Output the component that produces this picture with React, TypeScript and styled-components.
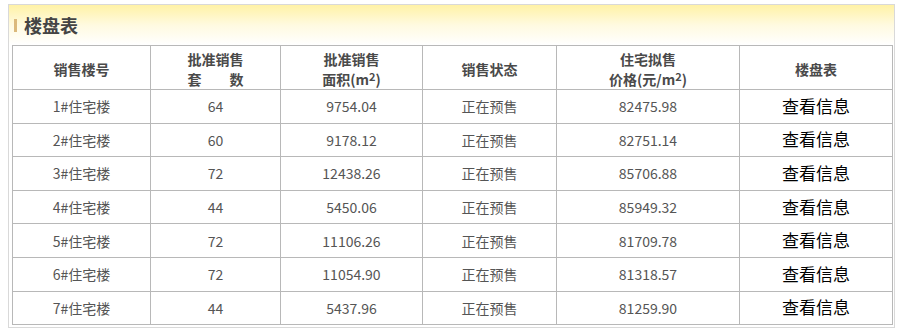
import styled, { createGlobalStyle } from 'styled-components';

const rows = [
    { name: '1#住宅楼', count: 64, area: '9754.04', price: '82475.98' },
    { name: '2#住宅楼', count: 60, area: '9178.12', price: '82751.14' },
    { name: '3#住宅楼', count: 72, area: '12438.26', price: '85706.88' },
    { name: '4#住宅楼', count: 44, area: '5450.06', price: '85949.32' },
    { name: '5#住宅楼', count: 72, area: '11106.26', price: '81709.78' },
    { name: '6#住宅楼', count: 72, area: '11054.90', price: '81318.57' },
    { name: '7#住宅楼', count: 44, area: '5437.96', price: '81259.90' },
]

const colWidths = [138, 130, 142, 134, 183, 153]

const GlobalStyle = createGlobalStyle`
    body {
        margin: 0;
        background: #fff;
        font-family: "Noto Sans CJK SC", "Noto Sans", sans-serif;
    }
`

export default function App() {
    return (
        <>
            <GlobalStyle/>
            <Panel>
                <Title>
                    <TitleBar/>
                    楼盘表
                </Title>
                <Table>
                    <colgroup>
                        {colWidths.map((w, i) => <col key={i} style={{width: w}}/>)}
                    </colgroup>
                    <thead>
                    <HeadRow>
                        <Th>销售楼号</Th>
                        <Th>批准销售<br/>套　　数</Th>
                        <Th>批准销售<br/>面积(m<Sup>2</Sup>)</Th>
                        <Th>销售状态</Th>
                        <Th>住宅拟售<br/>价格(元/m<Sup>2</Sup>)</Th>
                        <Th>楼盘表</Th>
                    </HeadRow>
                    </thead>
                    <tbody>
                    {rows.map((r) => (
                        <BodyRow key={r.name}>
                            <Td>{r.name}</Td>
                            <Td>{r.count}</Td>
                            <Td>{r.area}</Td>
                            <Td>正在预售</Td>
                            <Td>{r.price}</Td>
                            <Td><InfoLink>查看信息</InfoLink></Td>
                        </BodyRow>
                    ))}
                    </tbody>
                </Table>
            </Panel>
        </>
    );
}

const Panel = styled.div`
    box-sizing: border-box;
    width: 887px;
    margin: 4px 0 0 8px;
    padding: 0 2px 2px 3px;
    border: 1px solid #d9d9d9;
    background: linear-gradient(to bottom, #fff2a6 0px, #fffae0 20px, #ffffff 40px);
`
const Title = styled.div`
    display: flex;
    align-items: center;
    height: 40px;
    font-size: 18px;
    font-weight: 700;
    color: #444;
    gap: 7px;
`
const TitleBar = styled.span`
    width: 3px;
    height: 13px;
    margin-left: 2px;
    background: #dbb97c;
`
const Table = styled.table`
    width: 880px;
    table-layout: fixed;
    border-collapse: collapse;
    border: 1px solid #b8b8b8;
    font-size: 14px;
    color: #555;
`
const HeadRow = styled.tr`
    height: 44px;
`
const Th = styled.th`
    border: 1px solid #b8b8b8;
    padding: 2px 0 0;
    font-weight: 700;
    line-height: 20px;
    color: #4a4a4a;
    text-align: center;
`
const Sup = styled.sup`
    font-size: 11px;
    line-height: 0;
    vertical-align: 4px;
`
const BodyRow = styled.tr`
    height: 33.6px;
`
const Td = styled.td`
    border: 1px solid #b8b8b8;
    padding: 0;
    text-align: center;
    line-height: 20px;
`
const InfoLink = styled.a`
    font-size: 17px;
    color: #000;
    cursor: pointer;
`
